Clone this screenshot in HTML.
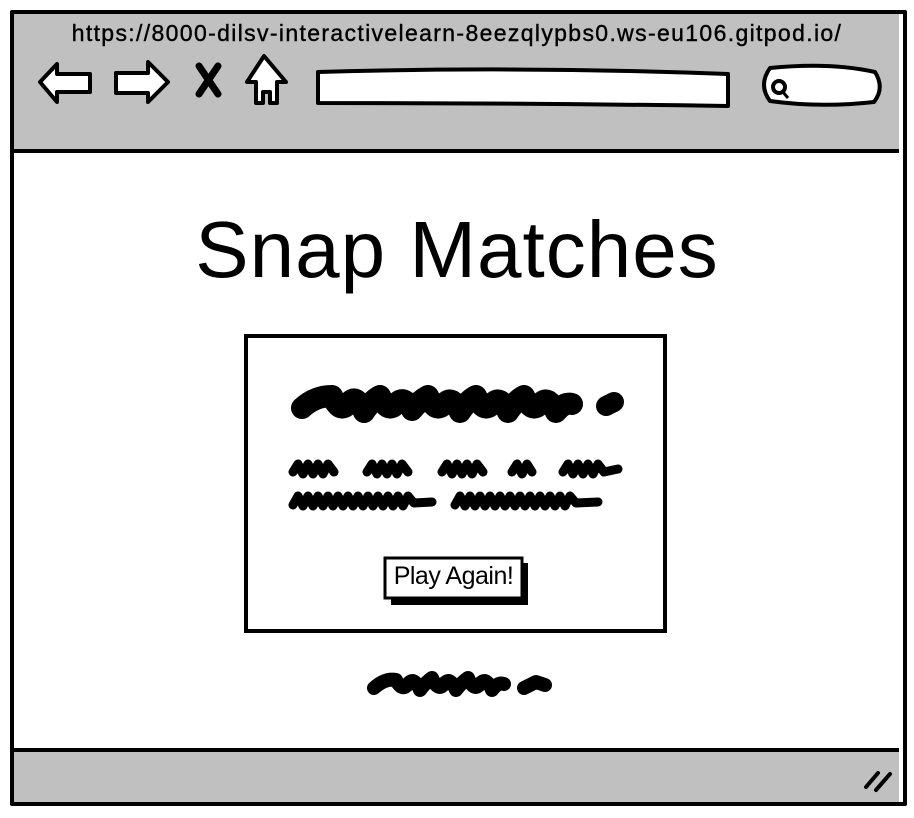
<!DOCTYPE html>
<html><head><meta charset="utf-8"><style>
body{margin:0;width:914px;height:818px;background:#fff;position:relative;overflow:hidden;font-family:"Liberation Sans",sans-serif}
.a{position:absolute}
</style></head><body>
<div class="a" style="left:10px;top:10px;width:889px;height:788px;border:4px solid #000;border-radius:2px;background:#fff"></div>
<div class="a" style="left:14px;top:14px;width:885px;height:135px;background:#c0c0c0;border-bottom:4px solid #000"></div>
<div class="a" style="left:14px;top:748px;width:885px;height:50px;background:#c0c0c0;border-top:4px solid #000"></div>
<div class="a" style="left:0;width:914px;top:20px;text-align:center;font-size:23px;color:#000;letter-spacing:1.35px;-webkit-text-stroke:0.4px #000">https://8000-dilsv-interactivelearn-8eezqlypbs0.ws-eu106.gitpod.io/</div>
<svg class="a" style="left:0;top:0" width="914" height="818">
<g fill="#fff" stroke="#000" stroke-width="4" stroke-linejoin="round">
<path d="M40 82 L57 64 L57 74 L90 74 L90 92 L57 92 L57 102 Z"/>
<path d="M168 82 L148 62 L148 73 L116 73 L116 93 L148 93 L148 102 Z"/>
<path d="M264 56 L247 82 L256 82 L256 103 L263 103 L263 92 L270 92 L270 103 L277 103 L277 82 L286 82 Z"/>
<path d="M318 72 Q520 66 728 74 L728 106 Q520 103 318 103 Z"/>
<path d="M770 68 Q830 62 875 72 Q885 88 874 102 Q820 108 770 101 Q758 85 770 68 Z"/>
<circle cx="779" cy="87" r="6"/>
</g>
<path d="M199 66 L218 94 M218 66 L199 94" stroke="#000" stroke-width="7" stroke-linecap="round"/>
<path d="M783 92 L788 98" stroke="#000" stroke-width="3"/>
<path d="M866 787 L878 773 M876 790 L890 774" stroke="#000" stroke-width="4" stroke-linecap="round"/>
<rect x="246" y="336" width="419" height="295" fill="#fff" stroke="#000" stroke-width="4"/>
<g fill="none" stroke="#000" stroke-linecap="round" stroke-linejoin="round">
<path d="M302 408 Q315 396 332 396 Q340 414 348 404 Q356 392 364 412 Q372 400 380 396 Q388 414 396 404 Q404 394 412 410 Q420 400 428 396 Q436 414 444 404 Q452 394 460 412 Q468 400 476 396 Q484 414 492 404 Q500 394 508 412 Q516 400 524 396 Q532 414 540 404 Q548 394 556 412 Q564 402 572 404" stroke-width="22"/>
<path d="M606 406 L614 402" stroke-width="20"/>
<path d="M293 472 L298 464 L303 474 L308 464 L313 474 L318 464 L323 474 L328 464 L334 472 M367 472 L372 464 L377 474 L382 464 L387 474 L392 464 L397 474 L402 464 L408 472 M442 472 L447 464 L452 474 L457 464 L462 474 L467 464 L472 474 L477 464 L483 472 M512 472 L517 464 L522 474 L527 464 L532 472 M563 472 L568 464 L573 474 L578 464 L583 474 L588 464 L593 474 L598 464 L604 472 L618 469" stroke-width="9"/>
<path d="M293 505 L298 496 L303 506 L308 496 L313 506 L318 496 L323 506 L328 496 L333 506 L338 496 L343 506 L348 496 L353 506 L358 496 L363 506 L368 496 L373 506 L378 496 L383 506 L388 496 L393 506 L398 496 L403 506 L408 496 L414 503 L432 502 M455 505 L460 496 L465 506 L470 496 L475 506 L480 496 L485 506 L490 496 L495 506 L500 496 L505 506 L510 496 L515 506 L520 496 L525 506 L530 496 L535 506 L540 496 L545 506 L550 496 L555 506 L560 496 L565 506 L570 496 L576 503 L598 502" stroke-width="9"/>
<path d="M374 688 Q385 678 396 680 Q402 692 408 684 Q414 676 420 690 Q426 682 432 678 Q438 692 444 684 Q450 676 456 690 Q462 682 468 678 Q474 692 480 684 Q486 676 492 690 Q498 682 504 684 M524 688 L536 682 L545 685" stroke-width="14"/>
</g>
<rect x="391" y="563" width="137" height="42" fill="#000"/>
<rect x="385" y="558" width="137" height="40" fill="#fff" stroke="#000" stroke-width="3"/>
</svg>
<div class="a" style="left:0;width:914px;top:204px;text-align:center;font-size:80px;color:#000;letter-spacing:1px">Snap Matches</div>
<div class="a" style="left:385px;width:137px;top:562px;text-align:center;font-size:25px;color:#000;letter-spacing:-0.5px">Play Again!</div>
</body></html>
